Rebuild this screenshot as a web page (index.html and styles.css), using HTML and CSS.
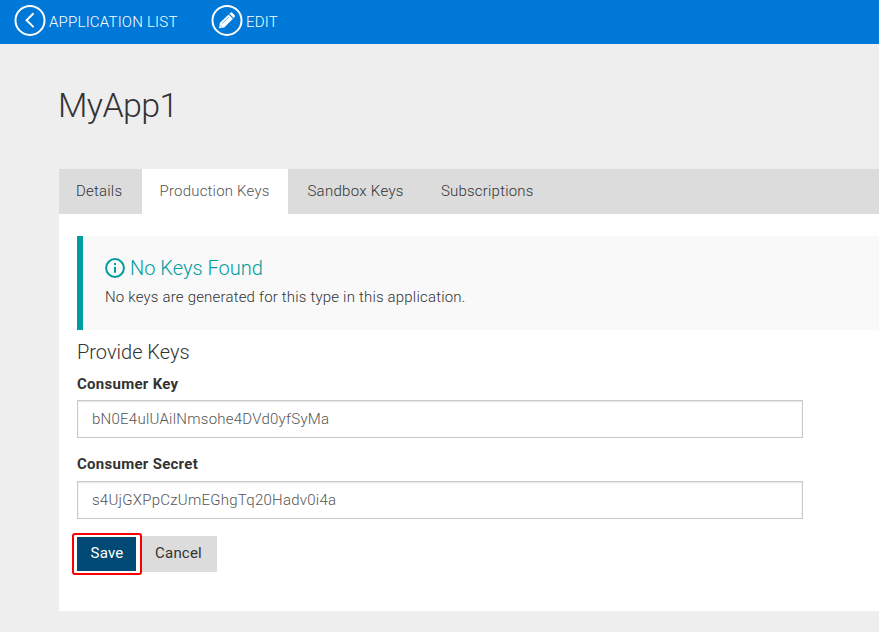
FILE: index.html
```html
<!DOCTYPE html>
<html lang="en">
<head>
<meta charset="utf-8">
<title>MyApp1</title>
<link rel="stylesheet" href="styles.css">
</head>
<body>
<header class="toolbar">
  <a class="action action-list">
    <svg class="action-icon" viewBox="0 0 32 32"><circle cx="16" cy="16.4" r="14.5"/><path d="M19.6 9.3 12.6 16.2l7 6.9"/></svg>
    <span>APPLICATION LIST</span>
  </a>
  <a class="action action-edit">
    <svg class="action-icon" viewBox="0 0 32 32"><circle cx="16" cy="16.4" r="14.5"/><path class="solid" d="M8 24.2l.8-5.2 8.8-8.5 4.4 4.3-8.8 8.6zM18.4 9.7l1-1q.9-.8 1.8 0l2.5 2.5q.8.9 0 1.8l-1 1z"/><path class="shine" d="M11.3 19.5l6.6-6.4M9 21.3l2 2"/></svg>
    <span>EDIT</span>
  </a>
</header>
<main class="page">
  <h1>MyApp1</h1>
  <nav class="tabs">
    <a class="tab tab-details"><span>Details</span></a>
    <a class="tab tab-production active"><span>Production Keys</span></a>
    <a class="tab tab-sandbox"><span>Sandbox Keys</span></a>
    <a class="tab"><span>Subscriptions</span></a>
  </nav>
  <section class="panel">
    <div class="notice">
      <h2><svg class="info" viewBox="0 0 20 20"><circle cx="10" cy="10" r="8.9"/><path d="M10 8.7v6M10 5v2"/></svg><span>No Keys Found</span></h2>
      <p><span>No keys are generated for this type in this application.</span></p>
    </div>
    <h3><span>Provide Keys</span></h3>
    <label for="key"><span>Consumer Key</span></label>
    <input id="key" type="text" value="bN0E4ulUAilNmsohe4DVd0yfSyMa">
    <label for="secret"><span>Consumer Secret</span></label>
    <input id="secret" class="secret" type="text" value="s4UjGXPpCzUmEGhgTq20Hadv0i4a">
    <div class="buttons">
      <div class="highlight"><button class="save">Save</button></div>
      <button class="cancel">Cancel</button>
    </div>
  </section>
</main>
</body>
</html>
```
FILE: styles.css
```css
* { box-sizing: border-box; }
body {
  margin: 0;
  height: 632px;
  overflow: hidden;
  background: #eee;
  color: #333;
  font: 300 15px/20px Roboto, "Liberation Sans", sans-serif;
}
h1, h2, h3, p { margin: 0; font-weight: 300; }
.toolbar {
  display: flex;
  height: 44px;
  padding: 4px 0 0 14px;
  background: #0078d7;
  color: #fff;
}
.action { display: flex; height: 32px; align-items: center; gap: 3px; letter-spacing: .22px; }
.action-list { width: 197px; }
.action span { padding-top: 3px; white-space: nowrap; }
.action-icon { width: 32px; height: 32px; fill: none; stroke: #fff; stroke-width: 2; }
.action-icon .solid { fill: #fff; stroke: none; }
.action-icon .shine { stroke: #0078d7; stroke-width: .6; }
.page { padding: 41px 0 0 59px; }
h1 { height: 84px; margin-left: -1px; font-size: 34px; line-height: 40px; letter-spacing: -.6px; }
.tabs { display: flex; height: 45px; background: #dcdcdc; letter-spacing: .2px; }
.tab { padding: 12px 18px 0; white-space: nowrap; }
.tab-details { width: 83px; padding-left: 17px; }
.tab-production { width: 146px; padding-left: 17.5px; }
.tab-sandbox { width: 135px; padding-left: 19.4px; letter-spacing: .3px; }
.tab.active { background: #fff; color: #555; }
.panel { height: 397px; padding: 22px 0 0 18px; background: #fff; }
.notice { height: 94px; padding: 19px 0 0 22px; border-left: 6px solid #009da0; background: #f9f9f9; }
.notice h2 { display: flex; align-items: center; gap: 5px; height: 25px; color: #009da0; font-size: 20px; }
.info { width: 20px; height: 20px; fill: none; stroke: #009da0; stroke-width: 2; }
.notice p { margin-top: 7px; letter-spacing: .19px; }
h3 { height: 44px; padding-top: 12px; font-size: 20px; }
label { display: block; height: 26px; font-weight: 700; line-height: 20px; letter-spacing: .28px; }
input {
  display: block;
  width: 726px;
  height: 38px;
  margin: 0 0 16px;
  padding: 0 14px;
  border: 1px solid #c8c8c8;
  background: #fff;
  box-shadow: inset 0 1px 2px #0000001a;
  color: #555;
  font: inherit;
  letter-spacing: .25px;
}
label[for="secret"] { height: 27px; }
.secret { margin-bottom: 14px; }
.buttons { display: flex; align-items: flex-start; margin-left: -5px; }
.highlight { width: 70px; height: 42px; padding: 2px 2px 2px 3px; border: 2px solid #fa0000; border-radius: 3px; background: #fff; }
button { margin: 0; padding: 0 0 2px; border: 0; font: 400 15px/20px Roboto, sans-serif; letter-spacing: .2px; }
.save { display: block; width: 59px; height: 34px; padding-left: 1px; background: #004a75; color: #fff; }
.cancel { width: 75px; height: 36px; margin-top: 3px; padding-right: 2px; background: #dcdcdc; color: #333; }
```
